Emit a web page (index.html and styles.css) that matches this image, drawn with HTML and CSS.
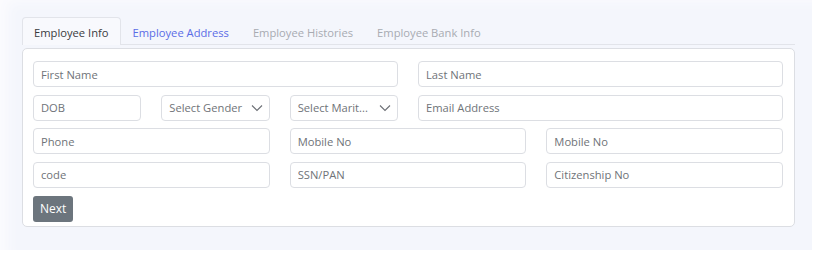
FILE: index.html
```html
<html>
    <head>
    <title>Employee Form</title>
    <link rel="stylesheet" href="styles.css">
    </head>
    <body>

    <div class="page">
        <nav class="tabs">
            <a class="tab active">Employee Info</a>
            <a class="tab link">Employee Address</a>
            <a class="tab muted">Employee Histories</a>
            <a class="tab muted">Employee Bank Info</a>
        </nav>

        <div class="card">
            <form class="form-grid">
                <input class="field span-6" placeholder="First Name">
                <input class="field span-6" placeholder="Last Name">

                <input class="field span-2" placeholder="DOB">
                <div class="select span-2">Select Gender
                    <svg class="caret" width="12" height="8" viewBox="0 0 12 8"><path d="M1 1.5 L6 6.5 L11 1.5" fill="none" stroke="#6c6f75" stroke-width="1.1"/></svg>
                </div>
                <div class="select span-2">Select Marit...
                    <svg class="caret" width="12" height="8" viewBox="0 0 12 8"><path d="M1 1.5 L6 6.5 L11 1.5" fill="none" stroke="#6c6f75" stroke-width="1.1"/></svg>
                </div>
                <input class="field span-6" placeholder="Email Address">

                <input class="field span-4" placeholder="Phone">
                <input class="field span-4" placeholder="Mobile No">
                <input class="field span-4" placeholder="Mobile No">

                <input class="field span-4" placeholder="code">
                <input class="field span-4" placeholder="SSN/PAN">
                <input class="field span-4" placeholder="Citizenship No">
            </form>
            <button class="btn-next">Next</button>
        </div>
    </div>

    </body>
</html>
```

FILE: styles.css
```css
body {
  font-family: 'Open Sans', sans-serif;
  margin: 0;
  padding: 0;
  background-color: #ffffff;
}

.page {
  width: 812px;
  height: 250px;
  box-sizing: border-box;
  padding: 17px 17px 0 22px;
  background-color: #f4f6fc;
  box-shadow: inset 12px 6px 12px -4px #fbfbfe;
}

/* tab strip */
.tabs {
  display: flex;
  border-bottom: 1px solid #e2e4ea;
  height: 27px;
}

.tab {
  padding: 0 11px;
  font-size: 11.2px;
  line-height: 29px;
  border: 1px solid transparent;
  border-bottom: none;
  border-radius: 4px 4px 0 0;
  cursor: pointer;
}

.tab.active {
  color: #3a3b3f;
  background-color: #f8f9fd;
  border-color: #e2e4ea;
  margin-bottom: -1px;
}

.tab.link {
  color: #5b6ce6;
}

.tab.muted {
  color: #a8abb2;
}

/* card */
.card {
  margin-top: 3px;
  background-color: #ffffff;
  border: 1px solid #dcdee3;
  border-radius: 5px;
  padding: 12px 11px 4px 10px;
  height: 179px;
  box-sizing: border-box;
}

.form-grid {
  display: grid;
  grid-template-columns: repeat(12, 1fr);
  column-gap: 20px;
  row-gap: 7.5px;
  margin: 0;
}

.span-2 { grid-column: span 2; }
.span-4 { grid-column: span 4; }
.span-6 { grid-column: span 6; }

.field,
.select {
  height: 26px;
  box-sizing: border-box;
  border: 1px solid #dcdee3;
  border-radius: 4px;
  padding: 0 7px;
  font-family: 'Open Sans', sans-serif;
  font-size: 11.2px;
  color: #495057;
  background-color: #ffffff;
  min-width: 0;
}

.field::placeholder {
  color: #6f7378;
}

.select {
  display: flex;
  align-items: center;
  justify-content: space-between;
  color: #6f7378;
  white-space: nowrap;
  padding-right: 6px;
}

.caret {
  flex: none;
}

.btn-next {
  margin-top: 8px;
  height: 26px;
  padding: 0 7px;
  border: none;
  border-radius: 3px;
  background-color: #6c757d;
  color: #ffffff;
  font-family: 'Open Sans', sans-serif;
  font-size: 12px;
  cursor: pointer;
}
```
